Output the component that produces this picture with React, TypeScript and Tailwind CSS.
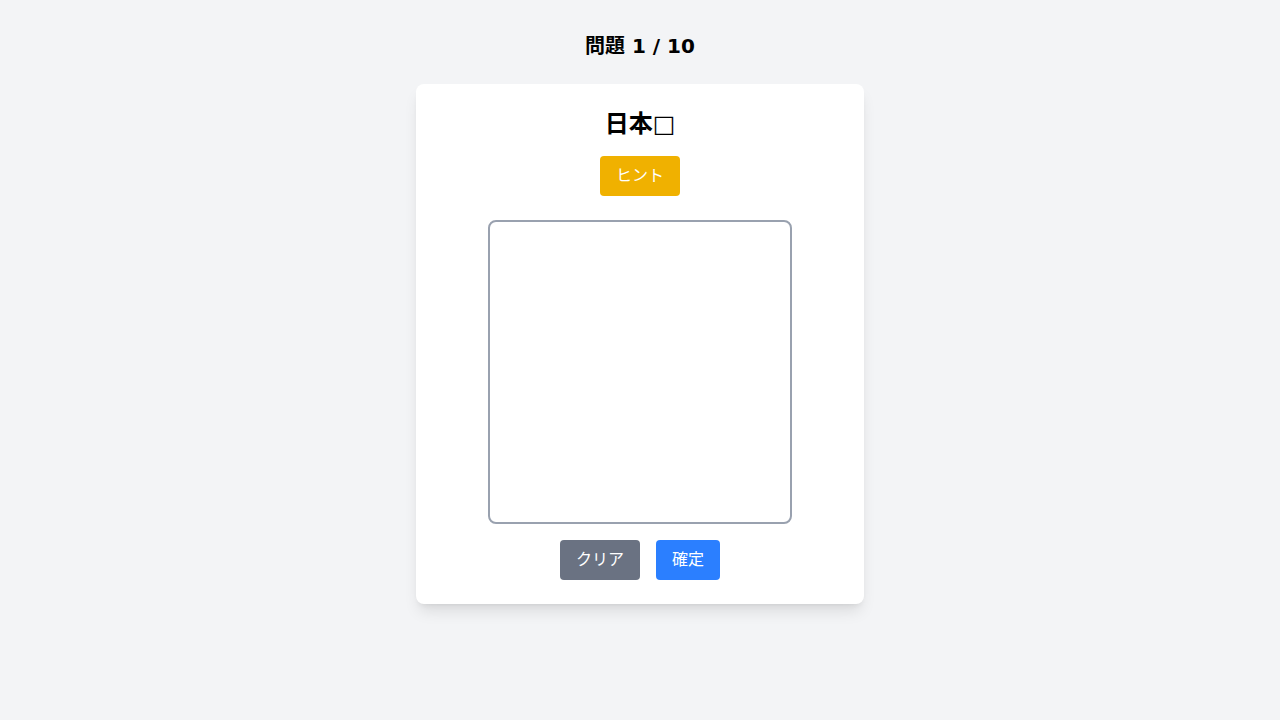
import React, { useRef } from 'react';

const App: React.FC = () => {
  const canvasRef = useRef<HTMLCanvasElement>(null);

  const handleClear = () => {
    const ctx = canvasRef.current?.getContext('2d');
    if (ctx) ctx.clearRect(0, 0, 300, 300);
  };

  return (
    <div className="min-h-screen bg-gray-100 flex flex-col items-center pt-8 font-['DejaVu_Sans','Noto_Sans_CJK_JP',sans-serif] text-black">
      <h2 className="text-xl font-bold mb-6">問題 1 / 10</h2>

      <div className="w-[448px] bg-white rounded-lg shadow-lg p-6 flex flex-col items-center">
        <h1 className="text-2xl font-bold mb-4">日本□</h1>

        <button className="bg-yellow-500 text-white px-4 py-2 rounded mb-6">ヒント</button>

        <canvas
          ref={canvasRef}
          width={300}
          height={300}
          className="block border-2 border-gray-400 rounded-lg bg-white"
        />

        <div className="flex gap-4 mt-4">
          <button onClick={handleClear} className="bg-gray-500 text-white px-4 py-2 rounded">
            クリア
          </button>
          <button className="bg-blue-500 text-white px-4 py-2 rounded">確定</button>
        </div>
      </div>
    </div>
  );
};

export default App;
